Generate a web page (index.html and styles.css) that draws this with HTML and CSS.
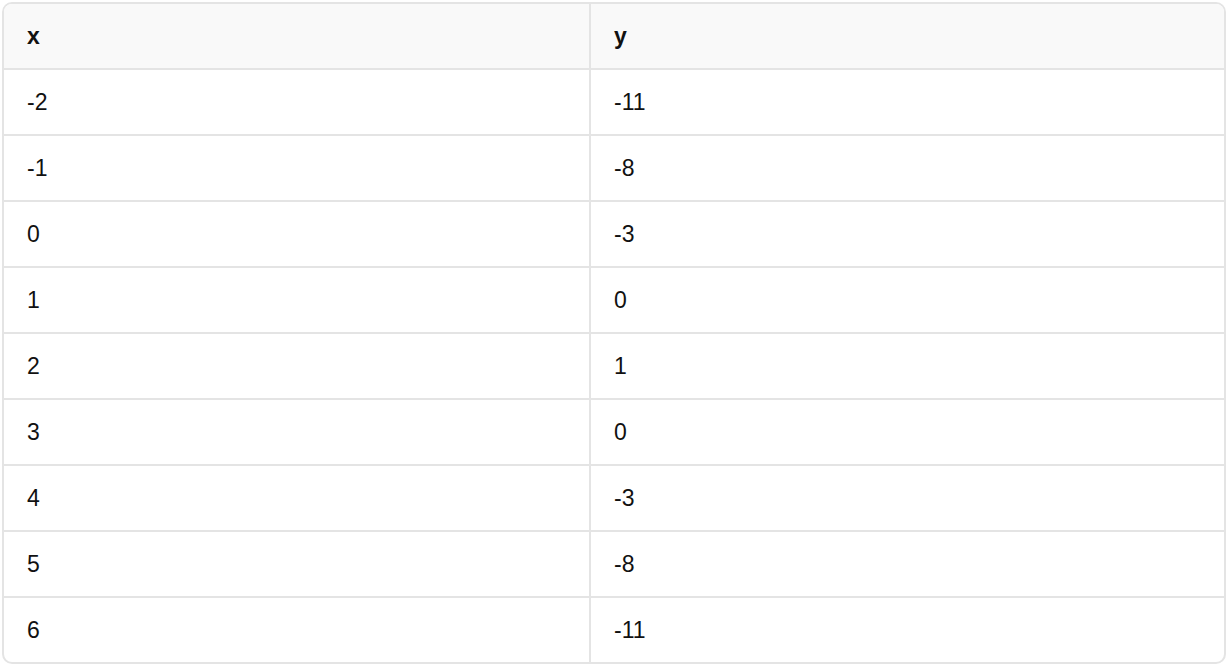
FILE: index.html
```html
<!DOCTYPE html>
<html>
<head>
<meta charset="utf-8">
<link rel="stylesheet" href="styles.css">
</head>
<body>
<div class="wrap">
<table class="data">
<thead>
<tr><th class="c1">x</th><th>y</th></tr>
</thead>
<tbody>
<tr><td>-2</td><td>-11</td></tr>
<tr><td>-1</td><td>-8</td></tr>
<tr><td>0</td><td>-3</td></tr>
<tr><td>1</td><td>0</td></tr>
<tr><td>2</td><td>1</td></tr>
<tr><td>3</td><td>0</td></tr>
<tr><td>4</td><td>-3</td></tr>
<tr><td>5</td><td>-8</td></tr>
<tr><td>6</td><td>-11</td></tr>
</tbody>
</table>
</div>
</body>
</html>
```
FILE: styles.css
```css
html, body {
  margin: 0;
  padding: 0;
  background: #ffffff;
}
.wrap {
  padding: 2px 6px 0 2px;
}
.data {
  width: 100%;
  border-collapse: separate;
  border-spacing: 0;
  border: 2px solid #e4e4e4;
  border-radius: 10px;
  overflow: hidden;
  font-family: "Liberation Sans", Arial, sans-serif;
  font-size: 23px;
  color: #111111;
  table-layout: fixed;
}
.data th, .data td {
  height: 66px;
  padding: 0 23px;
  text-align: left;
  vertical-align: middle;
  box-sizing: border-box;
  border-bottom: 2px solid #e4e4e4;
}
.data th {
  font-weight: bold;
  background: #f9f9f9;
}
.data th.c1 {
  width: 587px;
}
.data th:first-child, .data td:first-child {
  border-right: 2px solid #e4e4e4;
}
.data tbody tr:last-child td {
  border-bottom: none;
  height: 64px;
}
```
